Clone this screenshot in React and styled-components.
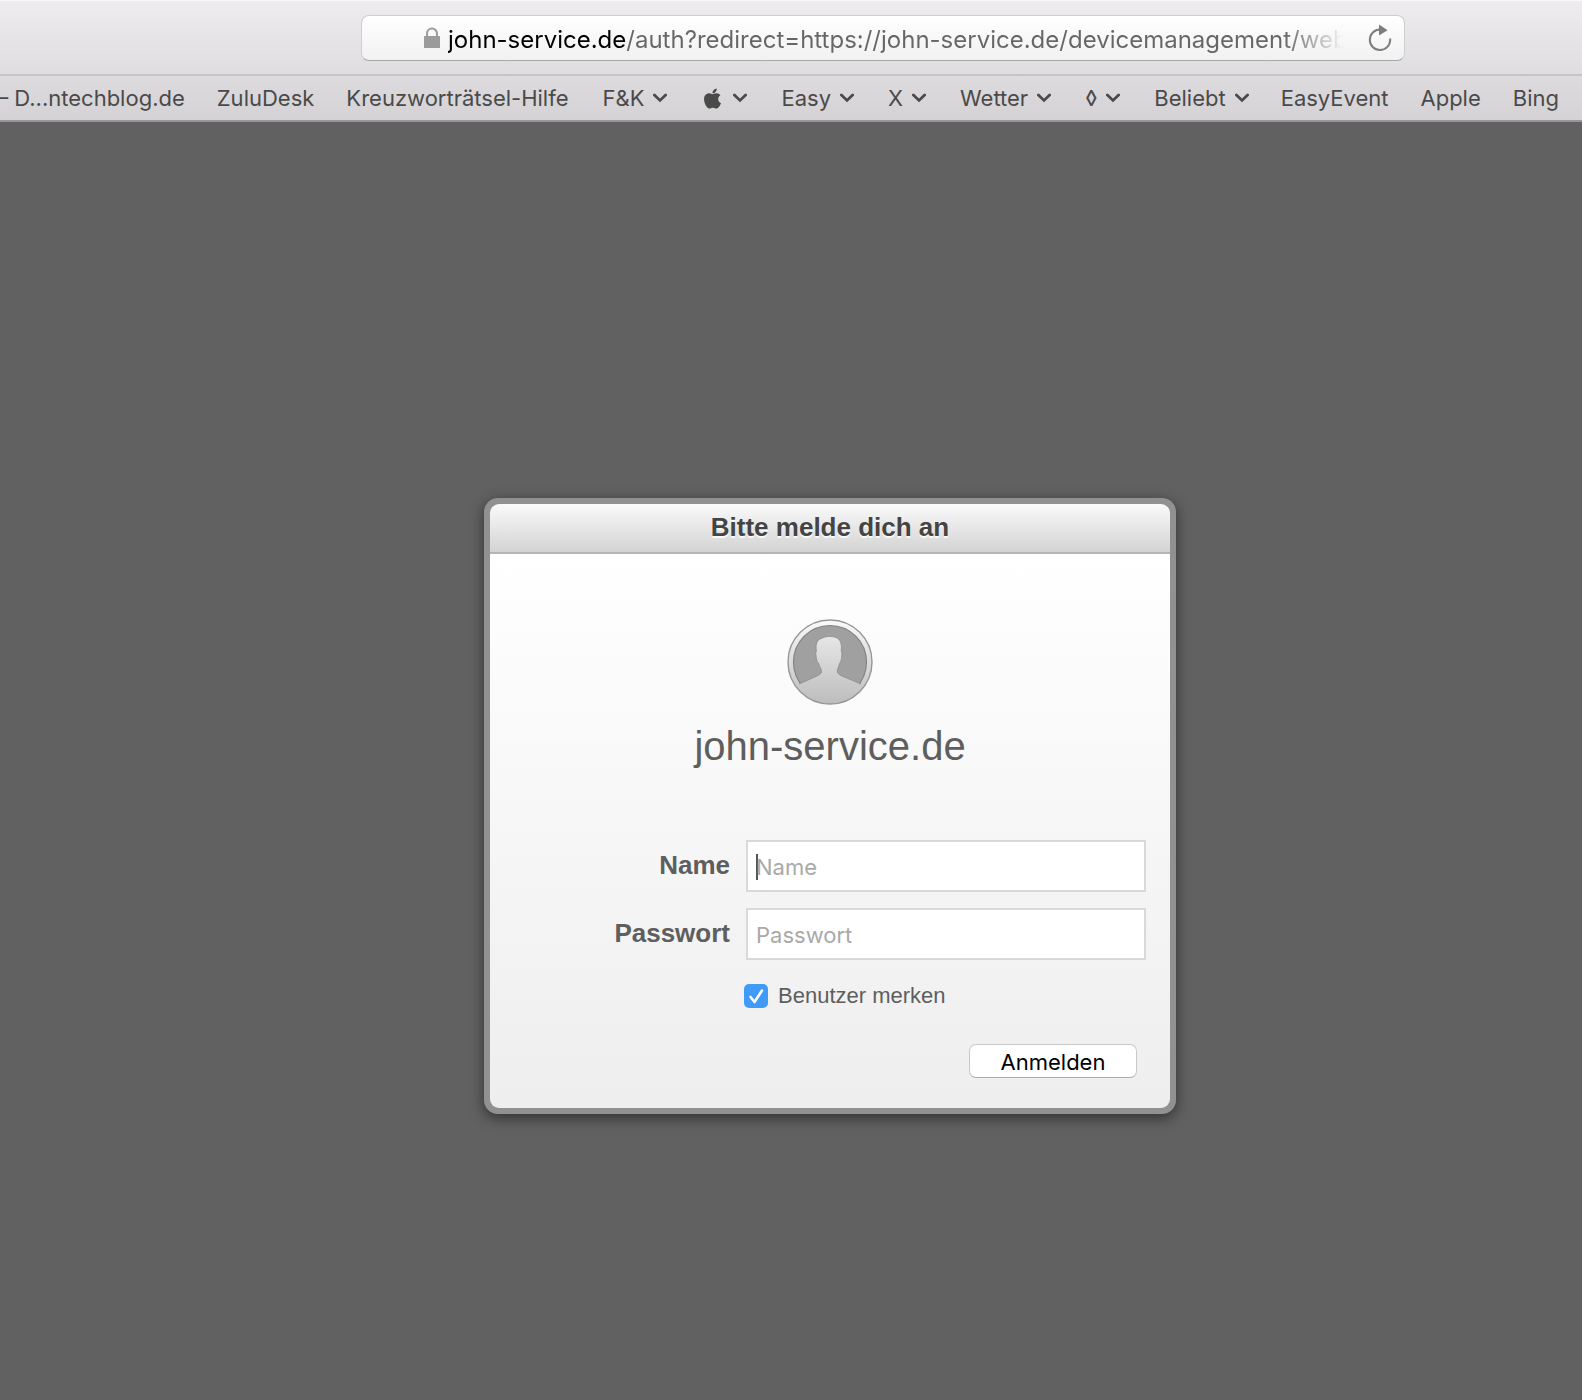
import React, { useState } from "react";
import styled, { createGlobalStyle } from "styled-components";
import { FaApple } from "react-icons/fa";

const bookmarks = [
  { id: 1, title: "– D...ntechblog.de" },
  { id: 2, title: "ZuluDesk" },
  { id: 3, title: "Kreuzworträtsel-Hilfe" },
  { id: 4, title: "F&K", folder: true },
  { id: 5, title: "Apple-Ordner", icon: <FaApple size={23} />, folder: true },
  { id: 6, title: "Easy", folder: true },
  { id: 7, title: "X", folder: true },
  { id: 8, title: "Wetter", folder: true },
  { id: 9, title: "◊", folder: true },
  { id: 10, title: "Beliebt", folder: true },
  { id: 11, title: "EasyEvent" },
  { id: 12, title: "Apple" },
  { id: 13, title: "Bing" }
];

const LockIcon = () => (
  <svg width="16" height="22" viewBox="0 0 16 22" aria-hidden="true">
    <rect x="0" y="9" width="16" height="12" rx="0.6" fill="#9b9b9b" />
    <path
      d="M3 10V6.5a5 5 0 0 1 10 0V10"
      fill="none"
      stroke="#9b9b9b"
      strokeWidth="2"
    />
  </svg>
);

const ReloadIcon = () => (
  <svg width="24" height="28" viewBox="0 0 24 28" aria-hidden="true">
    <path
      d="M12 5.6A10.2 10.2 0 1 0 22.2 16v-1.4"
      fill="none"
      stroke="#7d7d7d"
      strokeWidth="2"
    />
    <path d="M11 0.6L19.6 6.2L11 11.6z" fill="#7d7d7d" />
  </svg>
);

const Chevron = () => (
  <svg width="14" height="10" viewBox="1 0 14 10" aria-hidden="true">
    <path
      d="M2.4 2L8 7.4L13.6 2"
      fill="none"
      stroke="currentColor"
      strokeWidth="2.8"
      strokeLinecap="round"
    />
  </svg>
);

const personPath = `M12 65L30 57C33 55.6 35 54 34.4 51.4C33.8 48.6 32 47 31.4 44
  C30 43.4 29.2 39.5 29 36C28.6 34.4 28.6 33 29.4 32.4C28.8 28 28.8 24.4 31 21.6
  C32.4 19.8 34.6 19.6 36 18.8C40 16.8 47 17 50.6 19.4C54.4 22 54.8 27 54.2 32.4
  C55.2 33.2 55 35 54.8 36C54.6 39.6 54 43.2 52.8 44C52.2 47 50.8 48.8 50.4 51.4
  C50 54 52 55.8 55 57L74 65`;

const Avatar = () => (
  <svg width="86" height="86" viewBox="0 0 86 86" aria-hidden="true">
    <defs>
      <linearGradient id="ring" x1="0" y1="0" x2="0" y2="1">
        <stop offset="0" stopColor="#fafafa" />
        <stop offset="1" stopColor="#bcbcbc" />
      </linearGradient>
      <linearGradient
        id="person"
        gradientUnits="userSpaceOnUse"
        x1="0"
        y1="0"
        x2="0"
        y2="86"
      >
        <stop offset="0.2" stopColor="#e6e6e6" />
        <stop offset="1" stopColor="#bcbcbc" />
      </linearGradient>
      <clipPath id="disc">
        <path d="M0 0H86V63L73 65.5L43 76L13 65.5L0 63z" />
      </clipPath>
    </defs>
    <circle cx="43" cy="43" r="42" fill="url(#ring)" stroke="#979797" strokeWidth="1.4" />
    <g clipPath="url(#disc)">
      <circle cx="43" cy="43" r="36.5" fill="#a0a0a0" stroke="#838383" strokeWidth="1.2" />
    </g>
    <path
      d={`${personPath}C67 74.5 56 80.5 43 80.5C30 80.5 19 74.5 12 65z`}
      fill="url(#person)"
    />
    <path d={personPath} fill="none" stroke="#8a8a8a" strokeWidth="0.8" />
  </svg>
);

const Bookmark = ({ bookmark }) => {
  const { title, icon, folder } = bookmark;

  if (!folder) {
    return <BookmarkLink href="#">{title}</BookmarkLink>;
  }
  return (
    <FolderButton type="button" aria-label={title}>
      {icon || title}
      <Chevron />
    </FolderButton>
  );
};

const App = () => {
  const [remember, setRemember] = useState(true);

  return (
    <Page>
      <GlobalStyle />
      <Toolbar>
        <AddressBar>
          <LockIcon />
          <AddressInput
            type="text"
            aria-label="Adresse"
            defaultValue="john-service.de/auth?redirect=https://john-service.de/devicemanagement/web"
          />
          <ReloadButton type="button" aria-label="Neu laden">
            <ReloadIcon />
          </ReloadButton>
        </AddressBar>
      </Toolbar>
      <BookmarksBar>
        {bookmarks.map((bookmark) => (
          <Bookmark key={bookmark.id} bookmark={bookmark} />
        ))}
      </BookmarksBar>
      <Stage>
        <Dialog onSubmit={(e) => e.preventDefault()}>
          <DialogHeader>Bitte melde dich an</DialogHeader>
          <DialogBody>
            <Avatar />
            <ServiceName>john-service.de</ServiceName>
            <Fields>
              <FieldLabel htmlFor="name">Name</FieldLabel>
              <TextField id="name" type="text" placeholder="Name" $active />
              <FieldLabel htmlFor="password">Passwort</FieldLabel>
              <TextField id="password" type="password" placeholder="Passwort" />
              <Remember>
                <Checkbox
                  type="checkbox"
                  id="remember"
                  checked={remember}
                  onChange={(e) => setRemember(e.target.checked)}
                />
                <label htmlFor="remember">Benutzer merken</label>
              </Remember>
            </Fields>
            <SubmitButton type="submit">Anmelden</SubmitButton>
          </DialogBody>
        </Dialog>
      </Stage>
    </Page>
  );
};

export default App;

const GlobalStyle = createGlobalStyle`
  * {
    box-sizing: border-box;
  }
  body {
    margin: 0;
    background: #616161;
    font-family: "Liberation Sans", Arial, sans-serif;
  }
  button, input {
    font-family: Inter, sans-serif;
  }
`;

const Page = styled.div`
  min-height: 100vh;
  display: flex;
  flex-direction: column;
`;

const Toolbar = styled.header`
  padding: 15px 177px 13px 361px;
  background: linear-gradient(#eeecef, #dfdde0);
  border-bottom: 2px solid #c5c3c6;
  box-shadow: inset 0 1px 0 #f8f7f8;
`;

const AddressBar = styled.div`
  display: flex;
  align-items: center;
  height: 46px;
  padding: 0 12px 0 62px;
  border: 1px solid #cfcdd0;
  border-bottom-color: #a9a7aa;
  border-radius: 8px;
  background: linear-gradient(#ffffff, #f1f1f1);
`;

/* host part is black, the rest of the address is grey and fades out */
const AddressInput = styled.input`
  flex: 1;
  min-width: 0;
  height: 36px;
  margin: 0 24px 0 8px;
  padding: 2px 0 0;
  border: none;
  outline: none;
  font-size: 24px;
  color: transparent;
  background: linear-gradient(90deg, #000000 178px, #666666 178px);
  background-clip: text;
  -webkit-background-clip: text;
  mask-image: linear-gradient(90deg, #000 calc(100% - 60px), transparent);
`;

const ReloadButton = styled.button`
  display: flex;
  padding: 0;
  border: none;
  background: transparent;
  cursor: pointer;
`;

const BookmarksBar = styled.nav`
  display: flex;
  justify-content: flex-end;
  align-items: center;
  gap: 32px;
  height: 46px;
  padding: 0 23px 0 0;
  overflow: hidden;
  background: linear-gradient(#dddbde, #d4d2d5);
  border-bottom: 2px solid #98969a;
  font-family: Inter, sans-serif;
  font-size: 22px;
  color: #4a4a4a;
`;

const BookmarkLink = styled.a`
  flex: none;
  color: inherit;
  text-decoration: none;
  white-space: nowrap;
`;

const FolderButton = styled.button`
  flex: none;
  display: flex;
  align-items: center;
  gap: 9px;
  margin-left: 2px;
  padding: 0;
  border: none;
  background: transparent;
  color: inherit;
  font-size: 22px;
`;

const Stage = styled.main`
  flex: 1;
  display: flex;
  justify-content: center;
  align-items: center;
  padding: 90px 0 0 78px;
`;

const Dialog = styled.form`
  width: 100%;
  max-width: 692px;
  border: 6px solid #919191;
  border-radius: 14px;
  background: #919191;
  box-shadow: 0 4px 14px rgba(0, 0, 0, 0.5);
`;

const DialogHeader = styled.h1`
  margin: 0;
  height: 50px;
  border-bottom: 2px solid #b4b4b4;
  border-radius: 9px 9px 0 0;
  background: linear-gradient(#fafafa, #d3d3d3);
  color: #444444;
  font-size: 26px;
  line-height: 46px;
  text-align: center;
  text-shadow: 0 2px 0 rgba(255, 255, 255, 0.8);
`;

const DialogBody = styled.div`
  display: flex;
  flex-direction: column;
  align-items: center;
  padding: 65px 24px 30px;
  border-radius: 0 0 9px 9px;
  background: linear-gradient(#ffffff, #eeeeee);
  color: #5e5e5e;
`;

const ServiceName = styled.h2`
  margin: 18px 0 71px;
  font-size: 40px;
  font-weight: normal;
  line-height: 46px;
`;

const Fields = styled.div`
  width: 100%;
  display: grid;
  grid-template-columns: 1fr 400px;
  gap: 16px;
`;

const FieldLabel = styled.label`
  font-size: 26px;
  font-weight: bold;
  line-height: 50px;
  text-align: right;
`;

const TextField = styled.input`
  width: 100%;
  height: 52px;
  padding: 2px 8px 0;
  border: 2px solid #d9d9d9;
  border-radius: 0;
  outline: none;
  font-size: 22px;
  background: ${({ $active }) =>
    $active
      ? "linear-gradient(#555, #555) 8px 12px / 2px 26px no-repeat #ffffff"
      : "#ffffff"};
  &::placeholder {
    color: #a9a9a9;
  }
`;

const Remember = styled.div`
  grid-column: 2;
  display: flex;
  align-items: center;
  gap: 10px;
  margin: 8px 0 0 -2px;
  font-size: 22px;
  line-height: 24px;
`;

const Checkbox = styled.input`
  appearance: none;
  width: 24px;
  height: 24px;
  margin: 0;
  border-radius: 5px;
  background: #ffffff;
  &:checked {
    background: url("data:image/svg+xml,%3Csvg xmlns='http://www.w3.org/2000/svg' viewBox='0 0 24 24'%3E%3Cpath d='M6.5 13l4 5L18 6.5' fill='none' stroke='white' stroke-width='2.6' stroke-linecap='round' stroke-linejoin='round'/%3E%3C/svg%3E")
      #3f9af8;
  }
`;

const SubmitButton = styled.button`
  align-self: flex-end;
  width: 168px;
  height: 34px;
  margin: 36px 9px 0 0;
  padding: 2px 0 0;
  border: 1px solid #c8c8c8;
  border-bottom-color: #adadad;
  border-radius: 7px;
  background: #ffffff;
  color: #000000;
  font-size: 22px;
  line-height: 30px;
`;
